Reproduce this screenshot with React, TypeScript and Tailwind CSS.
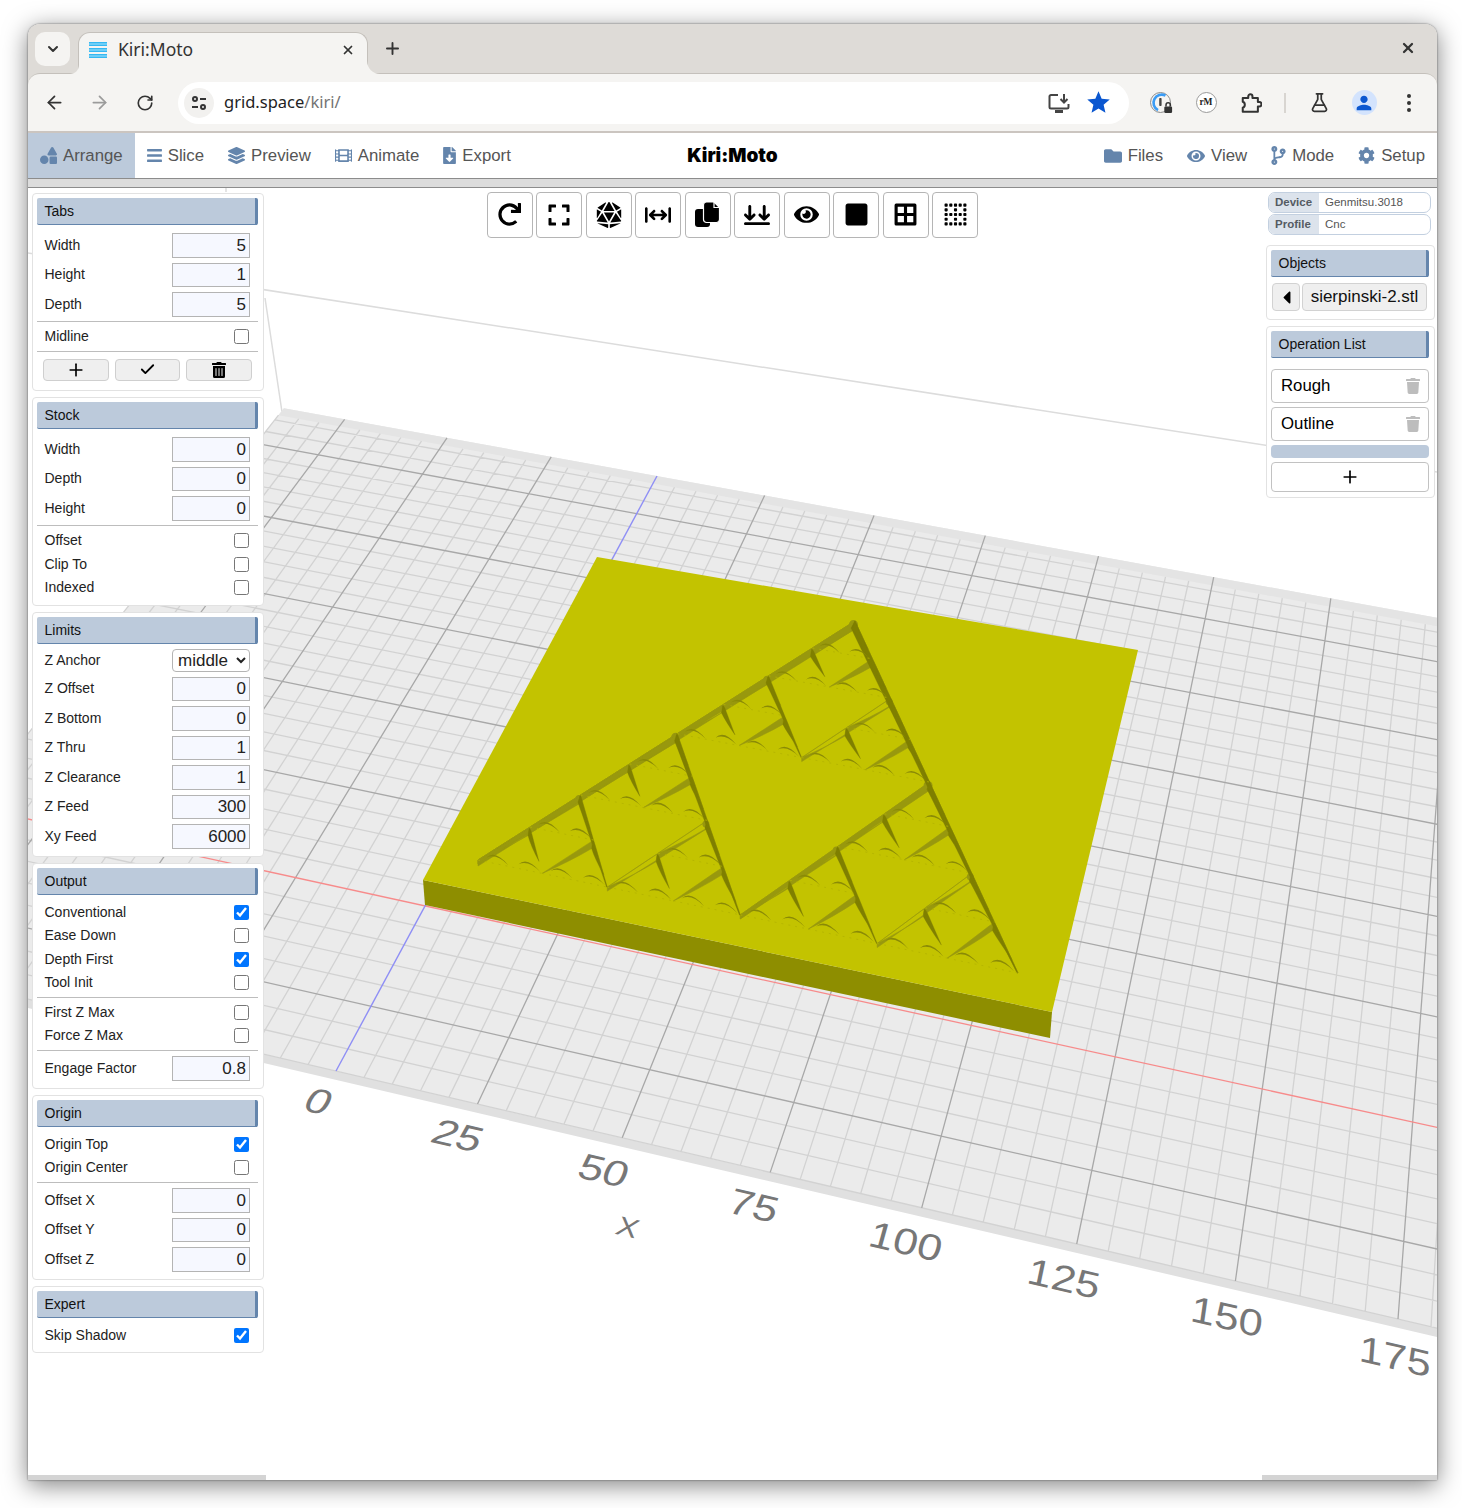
import React from 'react';
import { ArrowLeft, ArrowRight, Check as CheckIcon, ChevronDown, FlaskConical, Plus, RotateCw, X } from 'lucide-react';
import {
  FaBars, FaBorderAll, FaBorderNone, FaCaretLeft, FaCodeBranch, FaCog, FaDiceD20, FaExpand, FaEye,
  FaFileDownload, FaFilm, FaFolder, FaLayerGroup, FaRedo, FaShapes, FaSquare, FaTrash, FaTrashAlt,
} from 'react-icons/fa';
import { FaArrowsDownToLine, FaArrowsLeftRightToLine } from 'react-icons/fa6';
import { MdPerson, MdStar } from 'react-icons/md';

type P = [number, number];

// projective map from the unit square onto a screen quad
const quadMap = (q: P[]) => {
  const [[x0, y0], [x1, y1], [x2, y2], [x3, y3]] = q;
  const dx1 = x1 - x2, dx2 = x3 - x2, dx3 = x0 - x1 + x2 - x3;
  const dy1 = y1 - y2, dy2 = y3 - y2, dy3 = y0 - y1 + y2 - y3;
  const den = dx1 * dy2 - dx2 * dy1;
  const g = (dx3 * dy2 - dx2 * dy3) / den;
  const h = (dx1 * dy3 - dx3 * dy1) / den;
  const a = x1 - x0 + g * x1, b = x3 - x0 + h * x3, c = x0;
  const d = y1 - y0 + g * y1, e = y3 - y0 + h * y3, f = y0;
  const fwd = (u: number, v: number): P => {
    const w = g * u + h * v + 1;
    return [(a * u + b * v + c) / w, (d * u + e * v + f) / w];
  };
  const inv = (x: number, y: number): P => {
    const A = e - f * h, B = c * h - b, C = b * f - c * e;
    const D = f * g - d, E = a - c * g, F = c * d - a * f;
    const G = d * h - e * g, H = b * g - a * h, I = a * e - b * d;
    const w = G * x + H * y + I;
    return [(A * x + B * y + C) / w, (D * x + E * y + F) / w];
  };
  return { fwd, inv };
};

const bed = quadMap([[336, 1071], [1398, 1319], [1450, 620], [657, 476]]);
const W = (x: number, y: number): P => bed.fwd(x / 175, (y + 40) / 180);
const fmt = (p: P) => `${p[0].toFixed(1)} ${p[1].toFixed(1)}`;
const poly = (...pts: P[]) => 'M' + pts.map(fmt).join('L') + 'Z';
const seg = (a: P, b: P) => `M${fmt(a)}L${fmt(b)}`;

const X0 = -90, X1 = 210, Y0 = -40, Y1 = 140;
let minorPath = '';
let majorPath = '';
for (let x = X0; x <= X1; x += 5) {
  if (x === 0) continue;
  if (x % 25 === 0) majorPath += seg(W(x, Y0), W(x, Y1));
  else minorPath += seg(W(x, Y0), W(x, Y1 - 3));
}
for (let y = Y0; y <= Y1 - 5; y += 5) {
  if (y === 0) continue;
  if (y % 25 === 0) majorPath += seg(W(X0, y), W(X1, y));
  else minorPath += seg(W(X0, y), W(X1, y));
}

// stock top face, used to subdivide the triangle with perspective
const top = quadMap([[423, 880], [1052, 1012], [1138, 650], [597, 557]]);
const midUv = (a: P, b: P): P => [(a[0] + b[0]) / 2, (a[1] + b[1]) / 2];
let lightWall = '';
let darkWall = '';
let arcs = '';
let dashes = '';
let caps = '';

const crescent = (t: P, l: P, r: P) => {
  const T = top.fwd(t[0], t[1]), L = top.fwd(l[0], l[1]), R = top.fwd(r[0], r[1]);
  const c: P = [(T[0] + L[0] + R[0]) / 3, (T[1] + L[1] + R[1]) / 3];
  const k = Math.hypot(R[0] - L[0], R[1] - L[1]) / 31;
  const a: P = [c[0] + (L[0] - R[0]) * 0.34, c[1] + (L[1] - R[1]) * 0.34 + 3 * k];
  const b: P = [c[0] + (R[0] - L[0]) * 0.34, c[1] + (R[1] - L[1]) * 0.34 + 6 * k];
  arcs += `M${fmt(a)}Q${fmt([c[0] - 2 * k, c[1] - 7 * k])} ${fmt(b)}Q${fmt([c[0] - 1 * k, c[1] - 3.5 * k])} ${fmt(a)}Z`;
};

const along = (a: P, b: P, t: number): P => [a[0] + (b[0] - a[0]) * t, a[1] + (b[1] - a[1]) * t];

const tri = (t: P, l: P, r: P, level: number) => {
  const T = top.fwd(t[0], t[1]), L = top.fwd(l[0], l[1]), R = top.fwd(r[0], r[1]);
  if (level < 3) {
    lightWall += poly(T, L, [L[0], L[1] + (level === 0 ? 6 : 4)], [T[0], T[1] + 8]);
    const w = level === 0 ? 4 : 2.5;
    darkWall += poly(T, R, [R[0] - 0.8, R[1]], [T[0] - w, T[1] + 7]);
    const rad = level === 2 ? 3.5 : 4.5;
    const cx = T[0] - 1.5, cy = T[1] + 3.5;
    caps += `M${cx - rad} ${cy}a${rad} ${rad} 0 1 0 ${2 * rad} 0a${rad} ${rad} 0 1 0 ${-2 * rad} 0Z`;
  } else {
    // smallest recess: an arched lip over the apex, lighter on the left, darker on the right
    const apex: P = [T[0] - 1, T[1] + 1.5];
    const under: P = [apex[0] - 1, apex[1] + 7];
    const nearL = along(T, L, 0.16);
    const nearR = along(T, R, 0.16);
    const endR = along(T, R, 0.74);
    const midL = along(T, L, 0.45);
    const midR = along(T, R, 0.38);
    lightWall += `M${fmt(L)}L${fmt(nearL)}Q${fmt(T)} ${fmt(apex)}L${fmt(under)}Q${fmt([midL[0], midL[1] + 6])} ${fmt(L)}Z`;
    darkWall += `M${fmt(apex)}Q${fmt(T)} ${fmt(nearR)}L${fmt(endR)}Q${fmt([midR[0] - 4, midR[1] + 1])} ${fmt(under)}Z`;
  }
  const tl = midUv(t, l), tr = midUv(t, r), lr = midUv(l, r);
  if (level < 3) {
    tri(t, tl, tr, level + 1);
    tri(tl, l, lr, level + 1);
    tri(tr, lr, r, level + 1);
  } else {
    crescent(tl, l, lr);
    crescent(tr, lr, r);
    dashes += seg(L, R);
  }
};
tri(top.inv(855, 621), top.inv(478, 860), top.inv(1018, 973), 0);

const axisLabels: { text: string; cx: number; cy: number; size?: number }[] = [
  { text: '0', cx: 319, cy: 1101 },
  { text: '25', cx: 458, cy: 1135 },
  { text: '50', cx: 604, cy: 1170 },
  { text: '75', cx: 754, cy: 1205 },
  { text: '100', cx: 906, cy: 1241 },
  { text: '125', cx: 1064, cy: 1278 },
  { text: '150', cx: 1227, cy: 1316 },
  { text: '175', cx: 1395, cy: 1356 },
  { text: 'X', cx: 628, cy: 1227, size: 32 },
];

const labelMatrix = (cx: number, cy: number, size: number) => {
  const ex = 0.974, ey = 0.228;
  const ux = 1591 - cx, uy = -1259 - cy;
  const len = Math.hypot(ux, uy);
  const upx = ux / len, upy = uy / len;
  const ky = 0.84;
  const half = 0.358 * size * ky;
  return `matrix(${ex} ${ey} ${(-upx * ky).toFixed(3)} ${(-upy * ky).toFixed(3)} ${(cx - upx * half).toFixed(1)} ${(cy - upy * half).toFixed(1)})`;
};

const Scene = () => (
  <svg className="absolute inset-0 block" width="1409" height="1292" viewBox="28 188 1409 1292">
    <path d="M28 253L1437 472M265 298L282 412M226 188L226 192" stroke="#dcdcdc" strokeWidth="1.5" fill="none" />
    <path d={poly(W(X0, Y0), W(X1, Y0), [W(X1, Y0)[0], W(X1, Y0)[1] + 9], [W(X0, Y0)[0], W(X0, Y0)[1] + 9])} fill="#e0e0e0" />
    <path d={poly(W(X0, Y0), W(X1, Y0), W(X1, Y1), W(X0, Y1))} fill="#ebebeb" />
    <path d={poly(W(X0, Y1 - 3), W(X1, Y1 - 3), W(X1, Y1), W(X0, Y1))} fill="#e4e4e4" />
    <path d={minorPath} stroke="#d2d2d2" strokeWidth="1.3" fill="none" />
    <path d={majorPath} stroke="#a8a8a8" strokeWidth="1.3" fill="none" />
    <path d={seg(W(X0, 0), W(X1, 0))} stroke="#f78b8b" strokeWidth="1.3" fill="none" />
    <path d={seg(W(0, Y0), W(0, Y1))} stroke="#8e8ef5" strokeWidth="1.4" fill="none" />
    {axisLabels.map((l) => (
      <text
        key={l.text}
        transform={labelMatrix(l.cx, l.cy, l.size ?? 44)}
        textAnchor="middle"
        fontFamily="Liberation Sans, Arial, sans-serif"
        fontSize={l.size ?? 44}
        fill="#777777"
      >
        {l.text}
      </text>
    ))}
    <path d="M423 880L1052 1012L1050 1038L425 905Z" fill="#8e8e00" />
    <path d="M423 880L597 557L1138 650L1052 1012Z" fill="#c3c300" />
    <path d={caps} fill="#98980e" />
    <path d={lightWall} fill="#98980e" stroke="#98980e" strokeWidth="0.6" strokeLinejoin="round" />
    <path d={darkWall} fill="#7f7f00" stroke="#7f7f00" strokeWidth="0.3" strokeLinejoin="round" />
    <path d={arcs} fill="#8a8a06" />
    <path d={dashes} stroke="#b2b200" strokeWidth="0.8" strokeDasharray="2 5" fill="none" />
  </svg>
);

const Panel = ({ title, children }: { title: string; children: React.ReactNode }) => (
  <div className="bg-white border border-[#e2e2e2] rounded-[4px] p-[4.5px]">
    <div className="h-[27px] flex items-center pl-[7.5px] bg-[#bccadb] border-r-[3px] border-r-[#6485ac] border-b border-b-[#6485ac] rounded-[2px] text-[14px] text-[#111]">
      {title}
    </div>
    {children}
  </div>
);

const Num = ({ label, value }: { label: string; value: string }) => (
  <div className="h-[29.5px] flex items-center justify-between pl-[7.5px] pr-[8px] text-[14px] text-[#222]">
    <span>{label}</span>
    <input
      readOnly
      value={value}
      className="w-[78px] h-[24.5px] text-right text-[17px] pr-[3px] bg-[#f6f8ff] border border-[#b4b4b4] text-[#222] outline-none"
    />
  </div>
);

const Check = ({ label, on }: { label: string; on?: boolean }) => (
  <div className="h-[23.5px] flex items-center justify-between pl-[7.5px] pr-[9px] text-[14px] text-[#222]">
    <span>{label}</span>
    <input type="checkbox" readOnly checked={!!on} className="w-[15px] h-[15px] m-0 accent-[#0075ff]" />
  </div>
);

const Rule = () => <div className="h-px bg-[#bdbdbd] mt-[2px] mb-[3px]" />;

const Body = ({ children }: { children: React.ReactNode }) => <div className="mt-[5.5px]">{children}</div>;

const LeftPanels = () => (
  <div className="absolute left-[3.5px] top-[4.5px] w-[232px] flex flex-col gap-[6px]">
    <Panel title="Tabs">
      <Body>
        <Num label="Width" value="5" />
        <Num label="Height" value="1" />
        <Num label="Depth" value="5" />
        <Rule />
        <Check label="Midline" />
        <Rule />
        <div className="flex gap-[6px] px-[6px] mt-[7px] mb-[4px]">
          <button className="flex-1 h-[22.5px] flex items-center justify-center bg-[#efefef] border border-[#cfcfcf] rounded-[4px] text-black">
            <Plus size={20} strokeWidth={2} />
          </button>
          <button className="flex-1 h-[22.5px] flex items-center justify-center bg-[#efefef] border border-[#cfcfcf] rounded-[4px] text-black">
            <CheckIcon size={17} strokeWidth={2.6} />
          </button>
          <button className="flex-1 h-[22.5px] flex items-center justify-center bg-[#efefef] border border-[#cfcfcf] rounded-[4px] text-black">
            <FaTrashAlt size={16} />
          </button>
        </div>
      </Body>
    </Panel>
    <Panel title="Stock">
      <Body>
        <Num label="Width" value="0" />
        <Num label="Depth" value="0" />
        <Num label="Height" value="0" />
        <Rule />
        <Check label="Offset" />
        <Check label="Clip To" />
        <Check label="Indexed" />
      </Body>
      <div className="h-[0.5px]" />
    </Panel>
    <Panel title="Limits">
      <div className="mt-[2.5px]">
        <div className="h-[27.5px] flex items-center justify-between pl-[7.5px] pr-[8px] text-[14px] text-[#222]">
          <span>Z Anchor</span>
          <select defaultValue="middle" className="w-[78px] h-[23px] pl-[1px] text-[17px] bg-white border border-[#b4b4b4] rounded-[4px] text-[#222]">
            <option>middle</option>
          </select>
        </div>
        <Num label="Z Offset" value="0" />
        <Num label="Z Bottom" value="0" />
        <Num label="Z Thru" value="1" />
        <Num label="Z Clearance" value="1" />
        <Num label="Z Feed" value="300" />
        <Num label="Xy Feed" value="6000" />
      </div>
    </Panel>
    <Panel title="Output">
      <Body>
        <Check label="Conventional" on />
        <Check label="Ease Down" />
        <Check label="Depth First" on />
        <Check label="Tool Init" />
        <Rule />
        <Check label="First Z Max" />
        <Check label="Force Z Max" />
        <Rule />
        <Num label="Engage Factor" value="0.8" />
      </Body>
    </Panel>
    <Panel title="Origin">
      <Body>
        <Check label="Origin Top" on />
        <Check label="Origin Center" />
        <Rule />
        <Num label="Offset X" value="0" />
        <Num label="Offset Y" value="0" />
        <Num label="Offset Z" value="0" />
      </Body>
    </Panel>
    <Panel title="Expert">
      <Body>
        <Check label="Skip Shadow" on />
      </Body>
    </Panel>
  </div>
);

const Pill = ({ label, value }: { label: string; value: string }) => (
  <div className="h-[21px] flex border-[1.5px] border-[#c3d0e0] rounded-[7px] overflow-hidden bg-white text-[11.5px]">
    <div className="w-[50px] bg-[#dce3ec] pl-[6px] font-bold text-[#555b63] leading-[18px]">{label}</div>
    <div className="pl-[6px] text-[#555] leading-[18px]">{value}</div>
  </div>
);

const OpRow = ({ label }: { label: string }) => (
  <div className="h-[34px] flex items-center justify-between pl-[9px] pr-[7px] bg-white border border-[#c2c2c2] rounded-[4px] text-[16.8px] text-black">
    <span>{label}</span>
    <FaTrash size={16} className="text-[#bdbdbd]" />
  </div>
);

const RightPanels = () => (
  <div className="absolute left-[1237.5px] top-[4px] w-[169px] flex flex-col">
    <div className="ml-[2.5px] w-[163px] flex flex-col gap-[1px]">
      <Pill label="Device" value="Genmitsu.3018" />
      <Pill label="Profile" value="Cnc" />
    </div>
    <div className="mt-[9.5px] flex flex-col gap-[6px]">
      <Panel title="Objects">
        <div className="flex gap-[2px] mt-[6px] ml-[1px] mr-[2px] mb-[3px]">
          <button className="w-[28px] h-[28px] flex items-center justify-center bg-[#efefef] border border-[#d2d2d2] rounded-[4px] text-black">
            <FaCaretLeft size={21} />
          </button>
          <div className="flex-1 h-[28px] flex items-center justify-center bg-[#efefef] border border-[#d2d2d2] rounded-[4px] text-[17px] text-[#111]">
            sierpinski-2.stl
          </div>
        </div>
      </Panel>
      <Panel title="Operation List">
        <div className="mt-[10.5px] flex flex-col gap-[4px]">
          <OpRow label="Rough" />
          <OpRow label="Outline" />
        </div>
        <div className="h-[12.5px] mt-[4.5px] rounded-[4px] bg-[#bccadb]" />
        <button className="w-full h-[30px] mt-[4px] mb-[1px] flex items-center justify-center bg-white border border-[#c2c2c2] rounded-[4px] text-black">
          <Plus size={20} strokeWidth={2} />
        </button>
      </Panel>
    </div>
  </div>
);

const CopyPages = () => (
  <svg width="25" height="25" viewBox="0 0 25 25">
    <path d="M3 7H13A2 2 0 0 1 15 9V22A3 3 0 0 1 12 25H3A3 3 0 0 1 0 22V10A3 3 0 0 1 3 7Z" fill="#000" />
    <path d="M11.500 0H19L24.500 5.500V17.500A3 3 0 0 1 21.500 20.500H11.500A3 3 0 0 1 8.500 17.500V3A3 3 0 0 1 11.500 0Z" fill="#000" stroke="#fff" strokeWidth="1.200" />
    <path d="M19 0V5.500H24.500" fill="none" stroke="#fff" strokeWidth="1.200" />
  </svg>
);

const toolIcons = [
  <FaRedo size={23} />,
  <FaExpand size={24} />,
  <FaDiceD20 size={26} />,
  <FaArrowsLeftRightToLine size={26} />,
  <CopyPages />,
  <FaArrowsDownToLine size={26} />,
  <FaEye size={25} />,
  <FaSquare size={25} />,
  <FaBorderAll size={25} />,
  <FaBorderNone size={25} />,
];

const Toolbar3d = () => (
  <div className="absolute left-0 right-0 top-[3.5px] flex justify-center gap-[3.5px]">
    {toolIcons.map((icon, i) => (
      <button key={i} className="w-[46px] h-[46px] flex items-center justify-center bg-white border border-[#b5b5b5] rounded-[4px] text-black">
        {icon}
      </button>
    ))}
  </div>
);

const NavItem = ({ icon, label, active }: { icon: React.ReactNode; label: string; active?: boolean }) => (
  <div className={active ? 'h-full flex items-center gap-[6px] px-[12px] bg-[#bccadb] text-[#555]' : 'h-full flex items-center gap-[6px] px-[12px] text-[#555]'}>
    <span className="text-[#6485ac]">{icon}</span>
    <span>{label}</span>
  </div>
);

const Nav = () => (
  <div className="h-[46px] shrink-0 grid grid-cols-[1fr_auto_1fr] items-center bg-white border-b border-[#8c8c8c] text-[16.8px]">
    <div className="h-full flex items-center">
      <NavItem active label="Arrange" icon={<FaShapes size={17} />} />
      <NavItem label="Slice" icon={<FaBars size={17} className="w-[15px]" />} />
      <NavItem label="Preview" icon={<FaLayerGroup size={17} />} />
      <NavItem label="Animate" icon={<FaFilm size={17} />} />
      <NavItem label="Export" icon={<FaFileDownload size={17} className="w-[13px]" />} />
    </div>
    <div className="pt-[1px] font-['Inter',sans-serif] font-black text-[19px] text-black">Kiri:Moto</div>
    <div className="h-full flex items-center justify-end">
      <NavItem label="Files" icon={<FaFolder size={18} />} />
      <NavItem label="View" icon={<FaEye size={18} />} />
      <NavItem label="Mode" icon={<FaCodeBranch size={19} className="w-[15px]" />} />
      <NavItem label="Setup" icon={<FaCog size={17} />} />
    </div>
  </div>
);

const Favicon = () => (
  <svg width="18" height="18" viewBox="0 0 18 18">
    <rect x="0" y="1" width="18" height="4" fill="#35b8f2" />
    <rect x="0" y="7" width="18" height="4" fill="#35b8f2" />
    <rect x="0" y="13" width="18" height="4" fill="#35b8f2" />
    <path d="M0 3H18M0 9H18M0 15H18" stroke="#a9e4fb" strokeWidth="1" />
  </svg>
);

const TabBar = () => (
  <div className="h-[49px] shrink-0 flex items-end bg-[#dedbd7] pl-[7px]">
    <div className="w-[35px] h-[34px] mb-[7px] flex items-center justify-center rounded-[10px] bg-[#f5f4f2] text-[#333]">
      <ChevronDown size={16} strokeWidth={3} />
    </div>
    <div className="relative z-10 w-[290px] h-[42px] -mb-[1px] ml-[8px] flex items-center pl-[10px] pr-[12px] pb-[8px] bg-[#f5f4f2] border border-b-0 border-[#c4c0bb] rounded-t-[12px] font-['Noto_Sans',sans-serif] text-[17.500px] text-[#333]">
      <Favicon />
      <span className="ml-[11px] flex-1">Kiri:Moto</span>
      <X size={14} strokeWidth={3} />
      <svg className="absolute -left-[9px] bottom-0" width="9" height="9" viewBox="0 0 9 9">
        <path d="M9 0V9H0C5 9 9 5 9 0Z" fill="#f5f4f2" />
      </svg>
      <svg className="absolute -right-[13px] bottom-0" width="13" height="13" viewBox="0 0 13 13">
        <path d="M0 0V13H13C6 13 0 7 0 0Z" fill="#f5f4f2" />
      </svg>
    </div>
    <div className="ml-[15px] mb-[15px] text-[#333]">
      <Plus size={19} strokeWidth={2.4} />
    </div>
    <div className="flex-1" />
    <div className="mr-[21px] mb-[17px] text-[#333]">
      <X size={16} strokeWidth={3.4} />
    </div>
  </div>
);

const Slot = ({ children }: { children: React.ReactNode }) => <div className="w-[45px] flex justify-center items-center">{children}</div>;

const AddressBar = () => (
  <div className="relative h-[60px] shrink-0 flex items-center pl-[4px] bg-[#f5f4f2] border-t border-[#c4c0bb] border-b-2 border-b-[#cbc5c0] rounded-t-[12px] text-[#333]">
    <Slot><ArrowLeft size={21} strokeWidth={2} /></Slot>
    <Slot><ArrowRight size={21} strokeWidth={2} className="text-[#9b9b9b]" /></Slot>
    <Slot><RotateCw size={18} strokeWidth={2.2} /></Slot>
    <div className="ml-[11px] w-[951px] h-[42px] flex items-center pl-[6px] rounded-full bg-white">
      <div className="w-[30px] h-[30px] flex items-center justify-center rounded-full bg-[#f2f1ef]">
        <svg width="18" height="18" viewBox="0 0 18 18" fill="none" stroke="#333" strokeWidth="2">
          <circle cx="5" cy="5" r="2" />
          <path d="M10 5H16" />
          <path d="M2 13H8" />
          <circle cx="13" cy="13" r="2" />
        </svg>
      </div>
      <span className="ml-[10px] font-['Noto_Sans',sans-serif] text-[16.500px] text-[#222]">
        grid.space<span className="text-[#737373]">/kiri/</span>
      </span>
      <div className="flex-1" />
      <svg width="24" height="24" viewBox="0 0 24 24" fill="none" stroke="#444" strokeWidth="2">
        <path d="M11 4H4A1.500 1.500 0 0 0 2.500 5.500V16A1.500 1.500 0 0 0 4 17.500H20A1.500 1.500 0 0 0 21.500 16V13" />
        <path d="M8 20.500H16" strokeWidth="3" />
        <path d="M17 3V11M13.500 8L17 11.500L20.500 8" />
      </svg>
      <div className="ml-[14px] mr-[17px] text-[#0b57d0]"><MdStar size={27} /></div>
    </div>
    <div className="ml-[9.500px] flex items-center">
      <Slot>
        <svg width="24" height="24" viewBox="0 0 24 24" fill="none">
          <circle cx="11.500" cy="11.500" r="10" stroke="#8b8b8b" strokeWidth="1" />
          <path d="M16.500 4.500A8 8 0 1 0 9 19.200" stroke="#3b9cf5" strokeWidth="2.600" />
          <rect x="10.200" y="7" width="2.400" height="8" rx="0.800" fill="#444" />
          <path d="M17 15.500V14A2.200 2.200 0 0 1 21.400 14V15.500" stroke="#333" strokeWidth="1.500" />
          <rect x="15.300" y="15.500" width="7.800" height="6.500" rx="1.200" fill="#333" />
        </svg>
      </Slot>
      <Slot>
        <div className="w-[21px] h-[21px] flex items-center justify-center rounded-full border border-[#9a9a9a] bg-white font-['Liberation_Serif',serif] font-bold text-[9.500px] text-[#222]">rM</div>
      </Slot>
      <Slot>
        <svg width="22" height="22" viewBox="0 0 24 24" fill="none" stroke="#333" strokeWidth="2.200" strokeLinejoin="round">
          <path d="M3 6.500H9V4.800A2.300 2.300 0 0 1 13.600 4.800V6.500H19.500V11H21A2.400 2.400 0 0 1 21 15.800H19.500V21.500H3V17.200C6 16.200 6 11.500 3 10.700Z" />
        </svg>
      </Slot>
      <div className="w-[23px] flex justify-center">
        <div className="w-[1.500px] h-[20px] bg-[#d8d5d1]" />
      </div>
      <Slot><FlaskConical size={21} strokeWidth={2} /></Slot>
      <Slot>
        <div className="w-[25px] h-[25px] flex items-center justify-center rounded-full bg-[#d3e3fd] text-[#0b57d0]">
          <MdPerson size={22} />
        </div>
      </Slot>
      <Slot>
        <svg width="6" height="20" viewBox="0 0 6 20" fill="#333">
          <circle cx="3" cy="3" r="2" />
          <circle cx="3" cy="10" r="2" />
          <circle cx="3" cy="17" r="2" />
        </svg>
      </Slot>
    </div>
  </div>
);

export default function App() {
  return (
    <div className="w-[1462px] h-[1508px] overflow-hidden bg-white pt-[24px] pl-[28px] font-['Liberation_Sans',Arial,sans-serif]">
      <div className="w-[1409px] h-[1456px] flex flex-col rounded-t-[12px] bg-white shadow-[0_5px_24px_rgba(0,0,0,0.5),0_0_2px_rgba(0,0,0,0.6)]">
        <div className="rounded-t-[12px] overflow-hidden shrink-0 bg-[#dedbd7]">
          <TabBar />
          <AddressBar />
        </div>
        <Nav />
        <div className="h-[9px] shrink-0 bg-[#dcdcdc] border-b border-[#8c8c8c]" />
        <div className="relative flex-1 overflow-hidden bg-white">
          <Scene />
          <Toolbar3d />
          <LeftPanels />
          <RightPanels />
          <div className="absolute left-0 bottom-0 w-[238px] h-[5px] bg-[#d4d4d4]" />
          <div className="absolute right-0 bottom-0 w-[175px] h-[5px] bg-[#d4d4d4]" />
        </div>
      </div>
    </div>
  );
}
